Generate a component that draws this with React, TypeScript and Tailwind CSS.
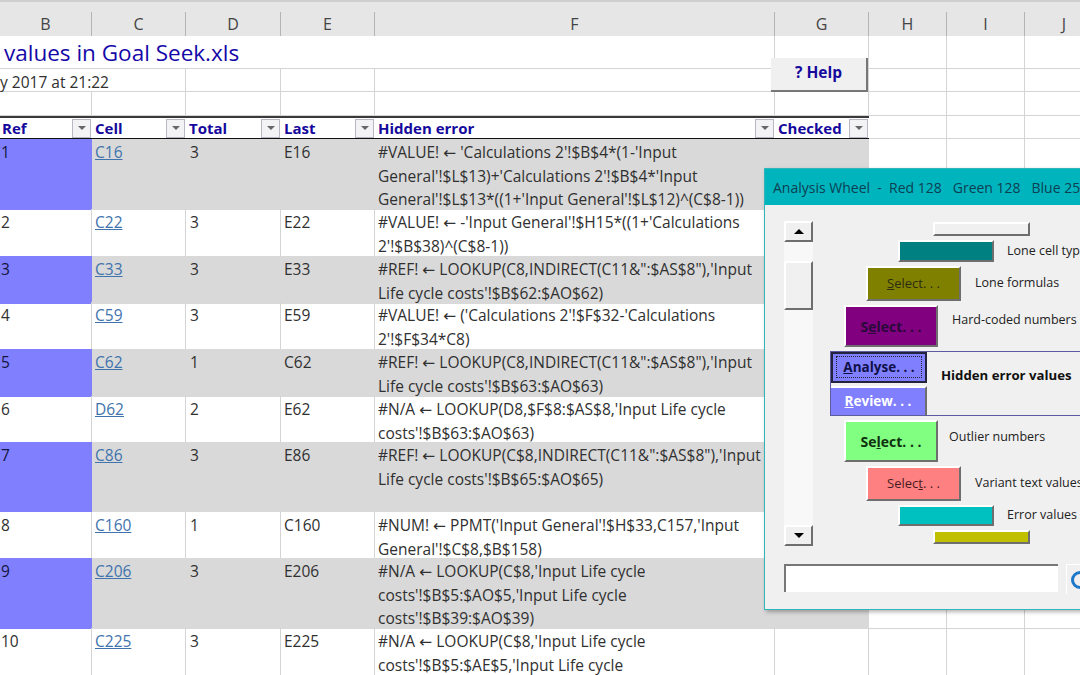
import { Fragment } from "react";

const rows = [
  { h: "h-[70px]", ref: "1", cell: "C16", total: "3", last: "E16", err: ["#VALUE! ← 'Calculations 2'!$B$4*(1-'Input", "General'!$L$13)+'Calculations 2'!$B$4*'Input", "General'!$L$13*((1+'Input General'!$L$12)^(C$8-1))"] },
  { h: "h-[47px]", ref: "2", cell: "C22", total: "3", last: "E22", err: ["#VALUE! ← -'Input General'!$H15*((1+'Calculations", "2'!$B$38)^(C$8-1))"] },
  { h: "h-[46px]", ref: "3", cell: "C33", total: "3", last: "E33", err: ["#REF! ← LOOKUP(C8,INDIRECT(C11&\":$AS$8\"),'Input", "Life cycle costs'!$B$62:$AO$62)"] },
  { h: "h-[47px]", ref: "4", cell: "C59", total: "3", last: "E59", err: ["#VALUE! ← ('Calculations 2'!$F$32-'Calculations", "2'!$F$34*C8)"] },
  { h: "h-[47px]", ref: "5", cell: "C62", total: "1", last: "C62", err: ["#REF! ← LOOKUP(C8,INDIRECT(C11&\":$AS$8\"),'Input", "Life cycle costs'!$B$63:$AO$63)"] },
  { h: "h-[46px]", ref: "6", cell: "D62", total: "2", last: "E62", err: ["#N/A ← LOOKUP(D8,$F$8:$AS$8,'Input Life cycle", "costs'!$B$63:$AO$63)"] },
  { h: "h-[70px]", ref: "7", cell: "C86", total: "3", last: "E86", err: ["#REF! ← LOOKUP(C$8,INDIRECT(C11&\":$AS$8\"),'Input", "Life cycle costs'!$B$65:$AO$65)"] },
  { h: "h-[46px]", ref: "8", cell: "C160", total: "1", last: "C160", err: ["#NUM! ← PPMT('Input General'!$H$33,C157,'Input", "General'!$C$8,$B$158)"] },
  { h: "h-[70px]", ref: "9", cell: "C206", total: "3", last: "E206", err: ["#N/A ← LOOKUP(C$8,'Input Life cycle", "costs'!$B$5:$AO$5,'Input Life cycle", "costs'!$B$39:$AO$39)"] },
  { h: "h-[47px]", ref: "10", cell: "C225", total: "3", last: "E225", err: ["#N/A ← LOOKUP(C$8,'Input Life cycle", "costs'!$B$5:$AE$5,'Input Life cycle"] },
];

const cols = "grid grid-cols-[92px_94px_95px_94px_400px_94px_78px_78px_78px]";
const line = "border-r border-b border-[#d4d4d4]";

function FilterCell({ label, pad }: { label: string; pad: string }) {
  return (
    <div className={`flex items-center justify-between ${pad} pr-px text-[15px] font-bold leading-[18px] text-[#15089c]`}>
      <span>{label}</span>
      <div className="flex h-[19px] w-[19px] items-center justify-center border border-[#b8b8c4] bg-[#f3f3f6]">
        <div className="h-0 w-0 border-x-[4px] border-t-[4px] border-x-transparent border-t-[#666666]" />
      </div>
    </div>
  );
}

function Bevel({ w, h, color, text, textClass }: { w: string; h: string; color: string; text?: React.ReactNode; textClass?: string }) {
  return (
    <div className={`flex shrink-0 items-center justify-center border-2 border-t-white border-l-white border-r-[#6e6e6e] border-b-[#6e6e6e] ${w} ${h} ${color} ${textClass ?? ""}`}>
      {text}
    </div>
  );
}

function Wheel({ ml, w, h, color, text, textClass, label, gap }: { ml: string; w: string; h: string; color: string; text?: React.ReactNode; textClass?: string; label?: string; gap?: string }) {
  return (
    <div className={`flex items-center ${ml}`}>
      <Bevel w={w} h={h} color={color} text={text} textClass={textClass} />
      {label && <span className={`${gap} whitespace-nowrap text-[12.5px] text-[#222222]`}>{label}</span>}
    </div>
  );
}

function Formula({ text }: { text: string }) {
  const parts = text.split("←");
  if (parts.length === 1) return <div>{text}</div>;
  return (
    <div>
      {parts.map((p, i) => (
        <Fragment key={i}>
          {i > 0 && <span className="font-['DejaVu_Sans']">←</span>}
          {p}
        </Fragment>
      ))}
    </div>
  );
}

export default function App() {
  return (
    <div className="relative h-[675px] w-[1080px] overflow-hidden bg-white font-['Open_Sans',sans-serif] text-[15.5px] text-[#303030]">
      {/* sheet header */}
      <div className="h-[36px] border-t-2 border-[#cfcfcf] bg-[#e6e6e6]">
        <div className={`${cols} mt-[10px] h-[24px] text-[16px] leading-[24px] text-[#444444]`}>
          {["B", "C", "D", "E", "F", "G", "H", "I", "J"].map((c) => (
            <div key={c} className="border-r border-[#b4b4b4] text-center last:border-r-0">
              {c}
            </div>
          ))}
        </div>
      </div>

      {/* title rows */}
      <div className={`${cols} h-[33px]`}>
        <div className="col-span-4 whitespace-nowrap border-b border-[#d4d4d4] pl-[4px] text-[22.5px] leading-[32px] text-[#1508a8]">
          <div className="translate-y-px">values in Goal Seek.xls</div>
        </div>
        {[0, 1, 2, 3, 4].map((i) => <div key={i} className={line} />)}
      </div>
      <div className={`${cols} h-[23px]`}>
        <div className="col-span-2 whitespace-nowrap border-r border-b border-[#d4d4d4] leading-[22px]">
          <div className="translate-y-[2px]">y 2017 at 21:22</div>
        </div>
        {[0, 1, 2, 3, 4, 5, 6].map((i) => <div key={i} className={line} />)}
      </div>
      <div className={`${cols} h-[24px]`}>
        {[0, 1, 2, 3, 4, 5, 6, 7, 8].map((i) => <div key={i} className={line} />)}
      </div>

      {/* table header */}
      <div className={`${cols} h-[23px]`}>
        <div className="col-span-6 grid h-[23px] grid-cols-[92px_94px_95px_94px_400px_94px] border-t-2 border-b border-t-[#3a3a3a] border-b-[#111111]">
          <FilterCell label="Ref" pad="pl-[2px]" />
          <FilterCell label="Cell" pad="pl-[3px]" />
          <FilterCell label="Total" pad="pl-[3px]" />
          <FilterCell label="Last" pad="pl-[3px]" />
          <FilterCell label="Hidden error" pad="pl-[3px]" />
          <FilterCell label="Checked" pad="pl-[3px]" />
        </div>
        <div className={line} />
        <div className={line} />
        <div className={line} />
      </div>

      {/* data rows */}
      {rows.map((r, i) => {
        const shaded = i % 2 === 0;
        const cell = shaded ? "bg-[#d9d9d9]" : line;
        return (
          <div key={r.ref} className={`${cols} ${r.h} leading-[23px]`}>
            <div className={`pl-[1px] pt-[2px] ${shaded ? "bg-[#8080ff] text-[#14143c]" : line}`}>{r.ref}</div>
            <div className={`pl-[3px] pt-[2px] ${cell}`}>
              <span className="text-[#3f73ad] underline">{r.cell}</span>
            </div>
            <div className={`pl-[4px] pt-[2px] ${cell}`}>{r.total}</div>
            <div className={`pl-[3px] pt-[2px] ${cell}`}>{r.last}</div>
            <div className={`whitespace-nowrap pl-[3px] pt-[1px] ${cell}`}>
              <div className="translate-y-px">
                {r.err.map((t) => (
                  <Formula key={t} text={t} />
                ))}
              </div>
            </div>
            <div className={cell} />
            <div className={line} />
            <div className={line} />
            <div className={line} />
          </div>
        );
      })}

      {/* help button, sits over the cells */}
      <div className="absolute left-[771px] top-[58px] flex h-[34px] w-[97px] items-center justify-center border-r-2 border-b-2 border-[#777777] bg-[#f0f0f0] pb-[3px] text-[15.5px] font-bold text-[#15089c]">
        ? Help
      </div>

      {/* floating analysis wheel */}
      <div className="absolute left-[764px] top-[168px] h-[442px] w-[340px] border border-[#2fb6bb] bg-[#f0f0f0] shadow-[2px_2px_4px_rgba(0,0,0,0.3)]">
        <div className="flex h-[36px] items-center whitespace-pre bg-[#00b4be] pl-[8px] text-[14px] text-[#0d3f52]">
          Analysis Wheel  -  Red 128   Green 128   Blue 254
        </div>
        <div className="flex pl-[19px] pt-[16px]">
          <div className="flex h-[325px] w-[29px] shrink-0 flex-col bg-[#f8f8f8]">
            <Bevel w="w-[29px]" h="h-[21px]" color="bg-[#f0f0f0]" text={<div className="h-0 w-0 border-x-[5px] border-b-[5px] border-x-transparent border-b-black" />} />
            <Bevel w="w-[29px] mt-[19px]" h="h-[49px]" color="bg-[#f0f0f0]" />
            <div className="flex-1" />
            <Bevel w="w-[29px]" h="h-[21px]" color="bg-[#f0f0f0]" text={<div className="h-0 w-0 border-x-[5px] border-t-[5px] border-x-transparent border-t-black" />} />
          </div>
          <div className="ml-[17px] flex flex-col gap-[4px] pt-px">
            <Wheel ml="ml-[103px]" w="w-[97px]" h="h-[14px]" color="bg-[#f0f0f0]" />
            <Wheel ml="ml-[68px]" w="w-[96px]" h="h-[22px]" color="bg-[#008080]" label="Lone cell type" gap="ml-[13px]" />
            <Wheel ml="ml-[36px]" w="w-[95px]" h="h-[35px]" color="bg-[#808000]" label="Lone formulas" gap="ml-[14px]" text={<span><u>S</u>elect. . .</span>} textClass="text-[13px] text-[#2c2c10]" />
            <Wheel ml="ml-[14px]" w="w-[94px]" h="h-[42px]" color="bg-[#800080]" label="Hard-coded numbers" gap="ml-[14px] -translate-y-[6px]" text={<span>S<u>e</u>lect. . .</span>} textClass="text-[14px] font-bold text-[#2a0a3a]" />
            <div className="flex h-[65px] w-[260px] border-y border-[#5e5aa0]">
              <div className="flex w-[97px] shrink-0 flex-col border-l border-[#5e5aa0]">
                <div className="flex h-[31px] items-center justify-center border-2 border-[#23233f] bg-[#8080ff] text-[13.5px] font-bold text-[#101048]">
                  <span className="border border-dotted border-[#23233f] px-[6px]"><u>A</u>nalyse. . .</span>
                </div>
                <div className="mt-[3px] flex h-[30px] items-center justify-center border-t-2 border-r-2 border-t-white border-r-[#6e6e6e] bg-[#8080ff] text-[13.5px] font-bold text-white">
                  <span><u>R</u>eview. . .</span>
                </div>
              </div>
              <div className="ml-[14px] mt-[14px] whitespace-nowrap text-[13.2px] font-bold text-[#111111]">Hidden error values</div>
            </div>
            <Wheel ml="ml-[14px]" w="w-[94px]" h="h-[42px]" color="bg-[#80ff80]" label="Outlier numbers" gap="ml-[11px] -translate-y-[4px]" text={<span>Se<u>l</u>ect. . .</span>} textClass="text-[14px] font-bold text-[#103010]" />
            <Wheel ml="ml-[36px]" w="w-[95px]" h="h-[35px]" color="bg-[#ff8080]" label="Variant text values" gap="ml-[14px]" text={<span>Selec<u>t</u>. . .</span>} textClass="text-[13px] text-[#4a1c24]" />
            <Wheel ml="ml-[68px]" w="w-[96px]" h="h-[21px]" color="bg-[#00c0c0]" label="Error values" gap="ml-[13px]" />
            <Wheel ml="ml-[103px]" w="w-[97px]" h="h-[14px]" color="bg-[#c0c000]" />
          </div>
        </div>
        <div className="mt-[18px] flex pl-[19px]">
          <div className="h-[28px] w-[274px] shrink-0 border-t-2 border-l-2 border-t-[#777777] border-l-[#777777] bg-white" />
          <div className="ml-[8px] flex h-[30px] w-[60px] shrink-0 items-center border-t border-l border-white bg-[#f0f0f0] pl-[4px]">
            <div className="h-[18px] w-[18px] shrink-0 rounded-full border-[3px] border-[#1e78c8]" />
          </div>
        </div>
      </div>
    </div>
  );
}
